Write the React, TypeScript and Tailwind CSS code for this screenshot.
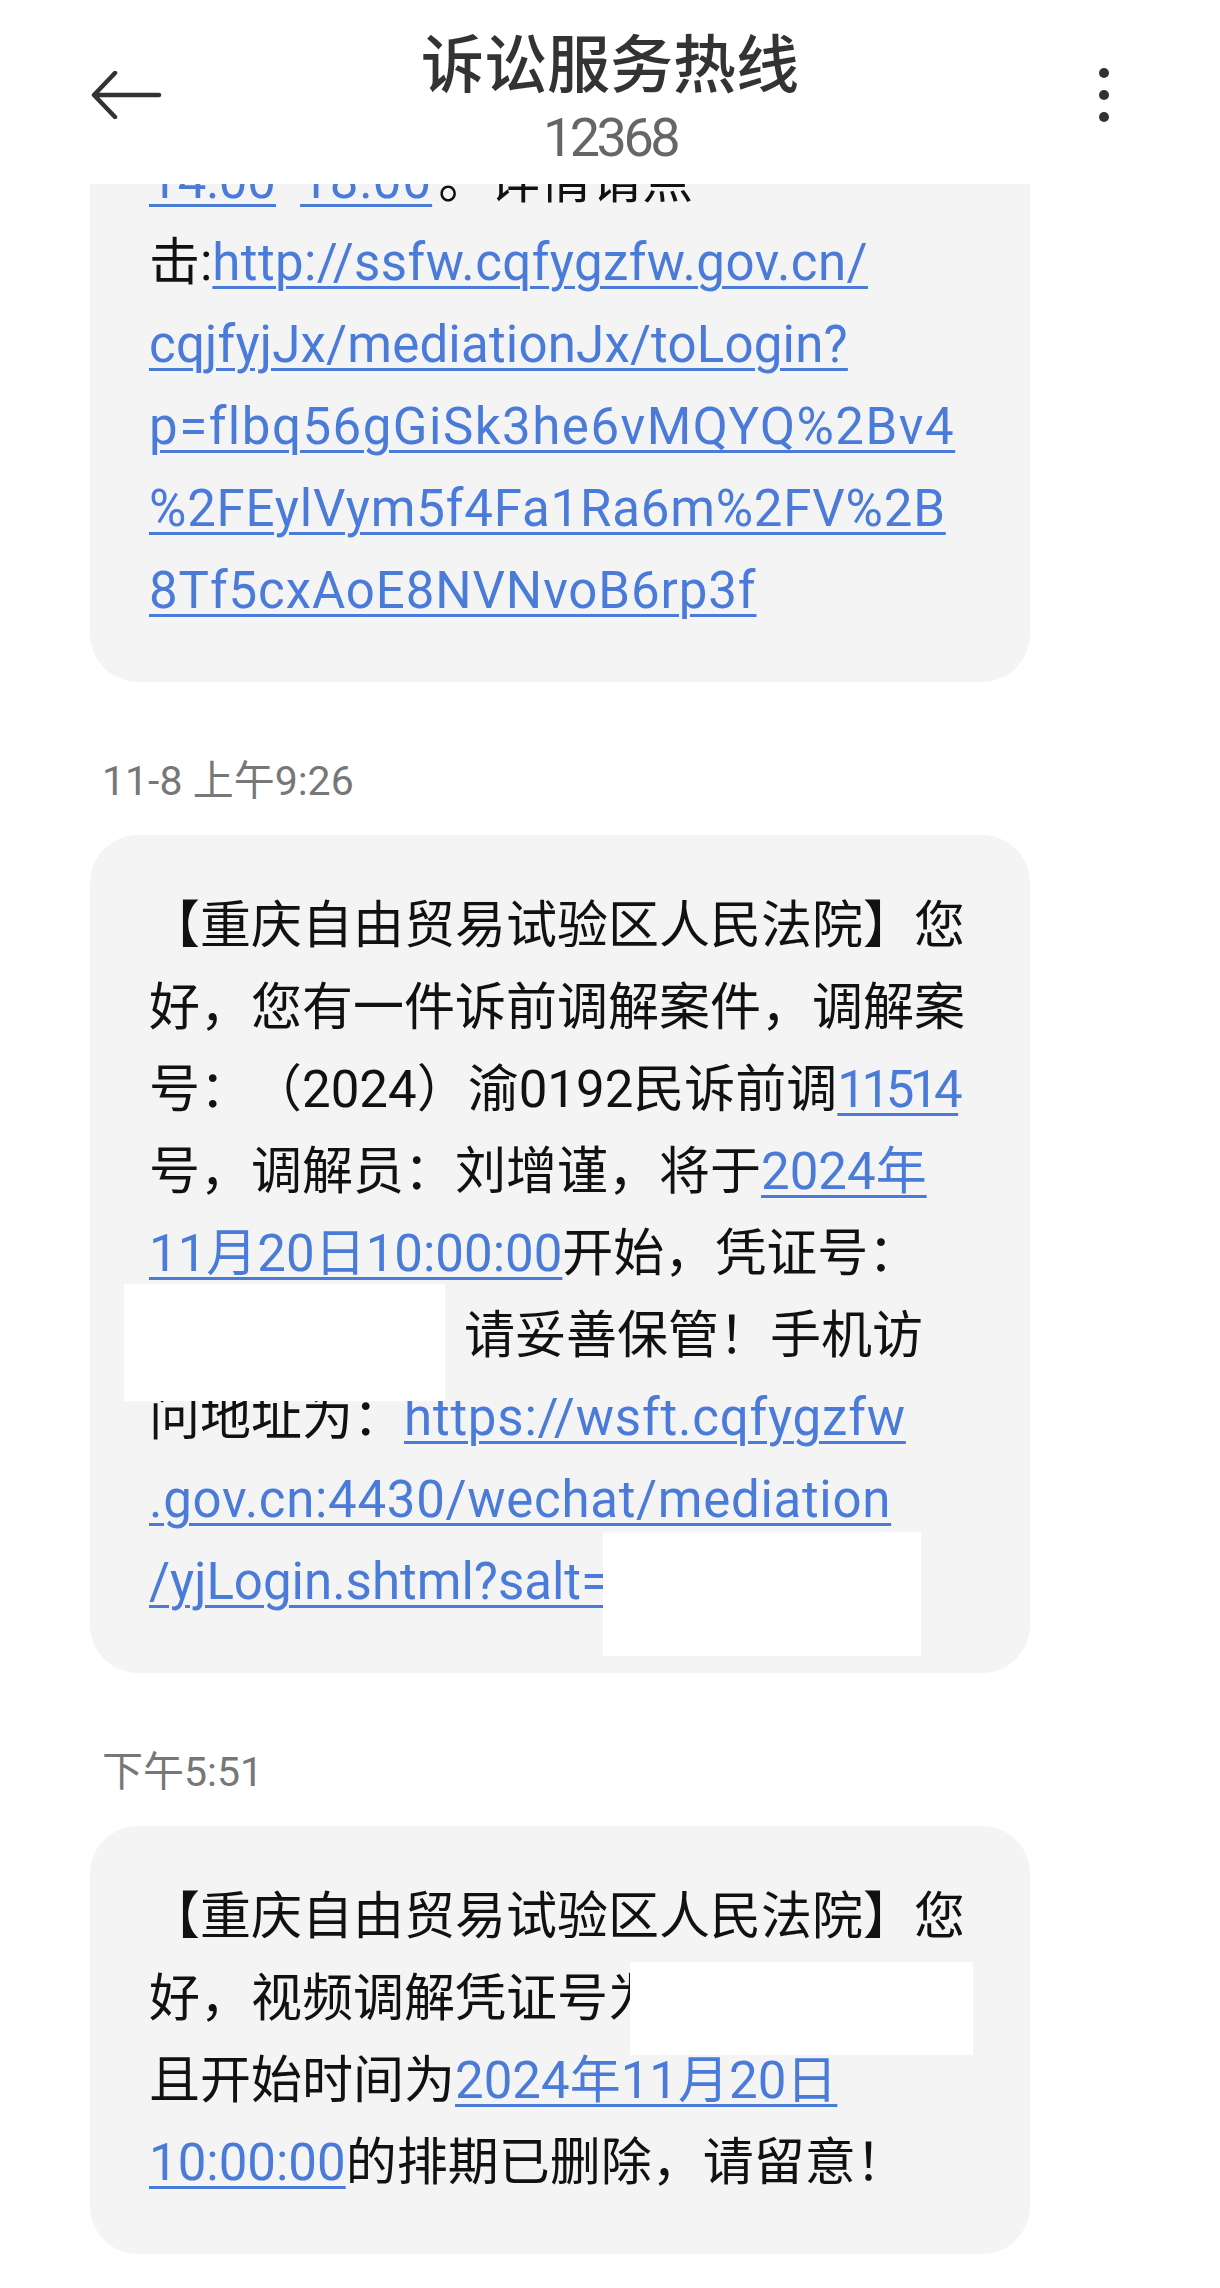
import type { ReactNode } from 'react';

const LINK = 'text-[#4a7bd9] underline decoration-[3px] underline-offset-[6px]';

function L({ href, className = '', children }: { href?: string; className?: string; children: ReactNode }) {
  return <a href={href ?? '#'} className={`${LINK} ${className}`}>{children}</a>;
}

function Line({ children }: { children: ReactNode }) {
  return <div className="h-[82px] whitespace-nowrap">{children}</div>;
}

function Bubble({ children, className = '' }: { children: ReactNode; className?: string }) {
  return (
    <div className={`relative w-[940px] rounded-[48px] bg-[#f4f4f5] pl-[59px] pr-[60px] py-[50px] text-[51px] leading-[82px] text-[#111] [text-spacing-trim:space-all] ${className}`}>
      {children}
    </div>
  );
}

function Stamp({ children }: { children: ReactNode }) {
  return (
    <div className="mt-[75px] mb-[30px] pl-[12px] text-[41px] leading-[48px] text-[#777]">{children}</div>
  );
}

export default function App() {
  const url1 = 'http://ssfw.cqfygzfw.gov.cn/cqjfyjJx/mediationJx/toLogin?p=flbq56gGiSk3he6vMQYQ%2Bv4%2FEylVym5f4Fa1Ra6m%2FV%2B8Tf5cxAoE8NVNvoB6rp3f';
  const url2 = 'https://wsft.cqfygzfw.gov.cn:4430/wechat/mediation/yjLogin.shtml';

  return (
    <div className="w-[1220px] h-[2288px] overflow-hidden bg-white flex flex-col font-['Roboto','Noto_Sans_CJK_SC',sans-serif]">
      {/* header */}
      <header className="h-[184px] shrink-0 grid grid-cols-[1fr_auto_1fr] bg-white">
        <div className="pl-[90px] pt-[71px]">
          <svg width="72" height="48" viewBox="0 0 72 48" fill="none" stroke="#333" strokeWidth="4.5" strokeLinecap="round" strokeLinejoin="round">
            <path d="M69 24H4M25 2L4 24l21 22" />
          </svg>
        </div>
        <div className="flex flex-col items-center pt-[24px]">
          <h1 className="text-[63px] leading-[72px] font-medium text-[#333] font-['Noto_Sans_CJK_SC',sans-serif]">诉讼服务热线</h1>
          <p className="mt-[12px] text-[54px] leading-[60px] tracking-[-3.5px] text-[#666]">12368</p>
        </div>
        <div className="flex justify-end pr-[110px] pt-[67px]">
          <svg width="12" height="56" viewBox="0 0 12 56" fill="#333">
            <circle cx="6" cy="6" r="5" />
            <circle cx="6" cy="28" r="5" />
            <circle cx="6" cy="50" r="5" />
          </svg>
        </div>
      </header>

      {/* messages */}
      <main className="flex-1 min-h-0 overflow-hidden pl-[90px]">
        <Bubble className="-mt-[94px]">
          <Line><L>14:00</L><span className="px-[5px]">-</span><L className="tracking-[1px]">18:00</L><span className="pl-[6px]">。</span>详情请点</Line>
          <Line>击:<L href={url1} className="tracking-[0.4px]">http://ssfw.cqfygzfw.gov.cn/</L></Line>
          <Line><L href={url1} className="tracking-[0.2px]">cqjfyjJx/mediationJx/toLogin?</L></Line>
          <Line><L href={url1} className="tracking-[1.5px]">p=flbq56gGiSk3he6vMQYQ%2Bv4</L></Line>
          <Line><L href={url1} className="tracking-[0.8px]">%2FEylVym5f4Fa1Ra6m%2FV%2B</L></Line>
          <Line><L href={url1} className="tracking-[0.9px]">8Tf5cxAoE8NVNvoB6rp3f</L></Line>
        </Bubble>

        <Stamp>11-8 上午9:26</Stamp>

        <Bubble>
          <Line>【重庆自由贸易试验区人民法院】您</Line>
          <Line>好，您有一件诉前调解案件，调解案</Line>
          <Line>号：（2024）渝0192民诉前调<L className="tracking-[-4.5px]">11514</L></Line>
          <Line>号，调解员：刘增谨，将于<L>2024年</L></Line>
          <Line><L>11月20日10:00:00</L>开始，凭证号：</Line>
          <Line><span className="inline-block w-[315px]" />请妥善保管！手机访</Line>
          <Line>问地址为：<L href={url2} className="tracking-[0.8px]">https://wsft.cqfygzfw</L></Line>
          <Line><L href={url2} className="tracking-[0.7px]">.gov.cn:4430/wechat/mediation</L></Line>
          <Line><L href={url2}>/yjLogin.shtml?salt=</L></Line>
          {/* redacted parts */}
          <div className="absolute left-[34px] top-[449px] w-[321px] h-[117px] bg-white" />
          <div className="absolute left-[513px] top-[697px] w-[318px] h-[124px] bg-white" />
        </Bubble>

        <Stamp>下午5:51</Stamp>

        <Bubble>
          <Line>【重庆自由贸易试验区人民法院】您</Line>
          <Line>好，视频调解凭证号为</Line>
          <Line>且开始时间为<L>2024年11月20日</L></Line>
          <Line><L>10:00:00</L>的排期已删除，请留意！</Line>
          <div className="absolute left-[540px] top-[136px] w-[343px] h-[93px] bg-white" />
        </Bubble>
      </main>
    </div>
  );
}
